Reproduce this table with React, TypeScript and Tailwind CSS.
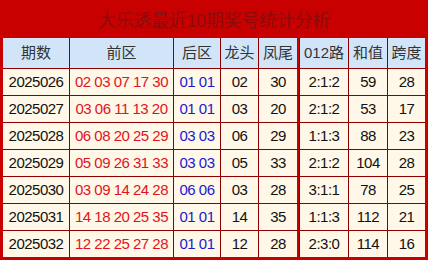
import React from 'react';

// 大乐透近期开奖统计表
const rows = [
  ['2025026', '02 03 07 17 30', '01 01', '02', '30', '2:1:2', '59', '28'],
  ['2025027', '03 06 11 13 20', '01 01', '03', '20', '2:1:2', '53', '17'],
  ['2025028', '06 08 20 25 29', '03 03', '06', '29', '1:1:3', '88', '23'],
  ['2025029', '05 09 26 31 33', '03 03', '05', '33', '2:1:2', '104', '28'],
  ['2025030', '03 09 14 24 28', '06 06', '03', '28', '3:1:1', '78', '25'],
  ['2025031', '14 18 20 25 35', '01 01', '14', '35', '1:1:3', '112', '21'],
  ['2025032', '12 22 25 27 28', '01 01', '12', '28', '2:3:0', '114', '16'],
];

const headers = ['期数', '前区', '后区', '龙头', '凤尾', '012路', '和值', '跨度'];

const cellColor = (i: number) => {
  if (i === 1) return 'text-[#e0141e]';
  if (i === 2) return 'text-[#1a1ad0]';
  return 'text-[#111]';
};

const App: React.FC = () => {
  return (
    <div className="w-[430px] h-[262px] bg-white font-['Liberation_Sans','Noto_Sans_CJK_SC',sans-serif]">
      <div className="w-[428px] flex flex-col border-[3px] border-[#c80000] bg-[#c80000]">
        {/* Title */}
        <div className="h-[35px] flex items-center justify-center text-[18px] leading-none text-[#8a0c0c] tracking-[-0.3px]">
          大乐透最近10期奖号统计分析
        </div>

        {/* Table */}
        <div className="grid grid-cols-[66px_103px_46px_37px_40px_48px_38px_37px] grid-rows-[30px_repeat(7,26px)] gap-px bg-[#8e0000]">
          {headers.map((h, i) => (
            <div
              key={h}
              className={
                'flex items-center justify-center bg-[#d2e5f8] text-[15px] text-[#333] whitespace-nowrap ' +
                (i === 4 ? 'border-r-2 border-[#c80000]' : '')
              }
            >
              {h}
            </div>
          ))}
          {rows.map((r) =>
            r.map((v, i) => (
              <div
                key={r[0] + '-' + i}
                className={
                  'flex items-center justify-center bg-[#fff8e8] text-[15px] tracking-[-0.5px] whitespace-nowrap ' +
                  cellColor(i) +
                  (i === 4 ? ' border-r-2 border-[#c80000]' : '')
                }
              >
                {v}
              </div>
            ))
          )}
        </div>
      </div>
    </div>
  );
};

export default App;
